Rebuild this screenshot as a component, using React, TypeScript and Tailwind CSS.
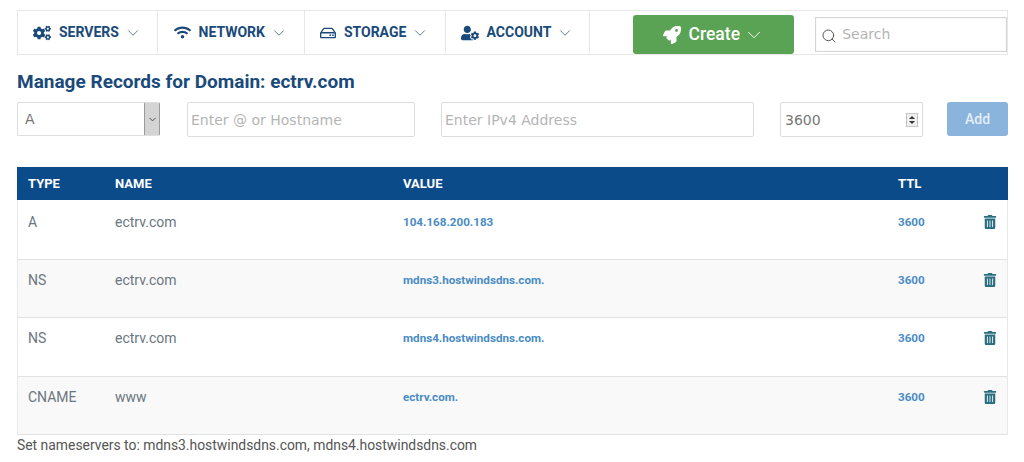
import { ChevronDown, Search } from "lucide-react";
import { FaCogs, FaRegHdd, FaRocket, FaTrashAlt, FaUserCog, FaWifi } from "react-icons/fa";

const navItems = [
  { label: "SERVERS", icon: FaCogs, width: "w-[140px]", iconSize: "text-[18px]" },
  { label: "NETWORK", icon: FaWifi, width: "w-[147px]", iconSize: "text-[17px]" },
  { label: "STORAGE", icon: FaRegHdd, width: "w-[141px]", iconSize: "text-[16px]" },
  { label: "ACCOUNT", icon: FaUserCog, width: "w-[145px]", iconSize: "text-[18px]" },
];

const records = [
  { type: "A", name: "ectrv.com", value: "104.168.200.183", height: "h-[60px] pt-[13px]", bg: "bg-white" },
  { type: "NS", name: "ectrv.com", value: "mdns3.hostwindsdns.com.", height: "h-[58px] pt-[11px]", bg: "bg-[#f9f9f9]" },
  { type: "NS", name: "ectrv.com", value: "mdns4.hostwindsdns.com.", height: "h-[59px] pt-[11px]", bg: "bg-white" },
  { type: "CNAME", name: "www", value: "ectrv.com.", height: "h-[58px] pt-[11px]", bg: "bg-[#f9f9f9]" },
];

const rowGrid = "grid grid-cols-[87px_288px_495px_1fr]";

export default function App() {
  return (
    <div className="h-[462px] w-[1024px] overflow-hidden bg-white pt-[10px] pl-[17px] pr-[16px] font-['Roboto',sans-serif]">
      <nav className="flex h-[45px] w-[991px] items-stretch border border-[#e7e7e7] bg-white">
        {navItems.map((item) => (
          <a key={item.label} className={`flex ${item.width} items-center justify-center border-r border-[#e7e7e7] text-[#1a4a7a]`}>
            <item.icon className={`${item.iconSize} mr-[8px]`} />
            <span className="text-[14px] font-bold">{item.label}</span>
            <ChevronDown className="ml-[5px] h-[18px] w-[18px] text-[#5f7487]" strokeWidth={1.25} />
          </a>
        ))}
        <button type="button" className="mt-[4px] ml-[43px] flex h-[39px] w-[161px] items-center justify-center rounded-[3px] bg-[#5aa354] text-white">
          <FaRocket className="mr-[8px] text-[18px]" />
          <span className="text-[17.5px] font-medium">Create</span>
          <ChevronDown className="ml-[3px] h-[22px] w-[22px]" strokeWidth={1} />
        </button>
        <div className="mt-[6px] ml-[21px] flex h-[35px] w-[192px] items-center border border-[#d5d5d5] bg-white pl-[5px] shadow-[inset_0_0_1px_#ccc]">
          <Search className="mt-[2px] h-[16px] w-[16px] text-[#555]" strokeWidth={1.5} />
          <span className="ml-[5px] font-['DejaVu_Sans',sans-serif] text-[14px] text-[#b3b3b3]">Search</span>
        </div>
      </nav>

      <h1 className="mt-[15px] text-[19px] leading-[24px] font-bold text-[#1a4a7a]">Manage Records for Domain: ectrv.com</h1>

      <div className="mt-[8px] flex h-[35px] items-start font-['DejaVu_Sans',sans-serif] text-[14px]">
        <div className="flex h-[34px] w-[143px] items-center justify-between rounded-[2px] border border-[#dedede] border-r-[#9a9a9a] bg-white pl-[7px] text-[#777]">
          <span className="pt-[1px]">A</span>
          <span className="flex h-full w-[15px] items-center justify-center border-l border-[#9a9a9a] bg-[#d4d4d4]">
            <ChevronDown className="h-[11px] w-[11px] text-[#444]" strokeWidth={2} />
          </span>
        </div>
        <div className="ml-[27px] flex h-[35px] w-[228px] items-center rounded-[2px] border border-[#dcdcdc] pt-[1px] pl-[3px] text-[#b5b5b5]">Enter @ or Hostname</div>
        <div className="ml-[26px] flex h-[35px] w-[313px] items-center rounded-[2px] border border-[#dcdcdc] pt-[1px] pl-[3px] text-[#b5b5b5]">Enter IPv4 Address</div>
        <div className="ml-[26px] flex h-[35px] w-[143px] items-center justify-between rounded-[2px] border border-[#dcdcdc] pt-[1px] pr-[4px] pl-[4px] text-[#777]">
          <span>3600</span>
          <span className="flex h-[14px] w-[12px] flex-col items-center justify-center gap-[2px] border border-[#c4c4c4] bg-[#efefef]">
            <span className="h-0 w-0 border-x-[3px] border-b-[3px] border-x-transparent border-b-[#333]" />
            <span className="h-0 w-0 border-x-[3px] border-t-[3px] border-x-transparent border-t-[#333]" />
          </span>
        </div>
        <button type="button" className="ml-[24px] h-[34px] w-[61px] rounded-[3px] bg-[#8ab4dc] font-['Roboto',sans-serif] text-[14px] font-medium text-[#e4eef7]">Add</button>
      </div>

      <div className="mt-[30px] w-[991px]">
        <div className={`${rowGrid} h-[33px] items-center bg-[#0c4b8a] pl-[11px] text-[13px] font-bold text-white`}>
          <span>TYPE</span>
          <span>NAME</span>
          <span>VALUE</span>
          <span>TTL</span>
        </div>
        <div className="border-x border-[#e8e8e8]">
          {records.map((record, i) => (
            <div key={i} className={`${rowGrid} ${record.height} ${record.bg} border-b border-[#dfe3e6] pl-[10px] text-[14px] leading-[18px] text-[#6b7680]`}>
              <span>{record.type}</span>
              <span>{record.name}</span>
              <span className="text-[11.65px] font-bold text-[#4a8cc4]">{record.value}</span>
              <span className="flex items-start justify-between pr-[10px]">
                <span className="text-[11.65px] font-bold text-[#4a8cc4]">3600</span>
                <FaTrashAlt className="mt-[2px] text-[14px] text-[#2a6e7f]" />
              </span>
            </div>
          ))}
        </div>
      </div>

      <p className="mt-[1px] text-[13.9px] leading-[18px] text-[#555]">Set nameservers to: mdns3.hostwindsdns.com, mdns4.hostwindsdns.com</p>
    </div>
  );
}
